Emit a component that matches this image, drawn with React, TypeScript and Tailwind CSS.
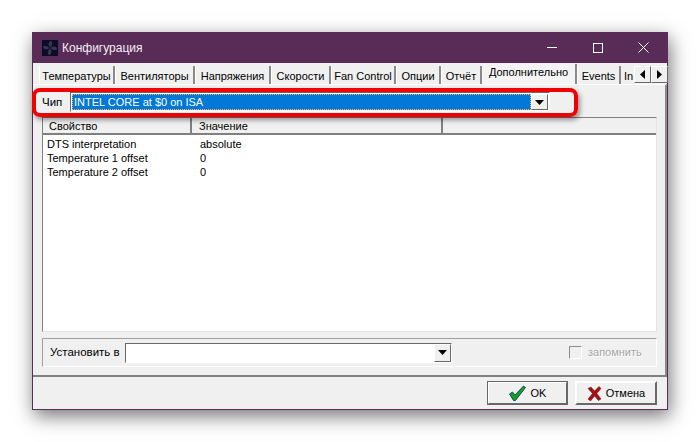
import React from "react";

const tabs = [
  { label: "Температуры", w: "w-[76px]" },
  { label: "Вентиляторы", w: "w-[80px]" },
  { label: "Напряжения", w: "w-[76px]" },
  { label: "Скорости", w: "w-[60px]" },
  { label: "Fan Control", w: "w-[65px]" },
  { label: "Опции", w: "w-[45px]" },
  { label: "Отчёт", w: "w-[41px]" },
];

function Arrow({ dir }: { dir: "left" | "right" | "down" }) {
  if (dir === "down") {
    return (
      <svg width="9" height="5" viewBox="0 0 9 5">
        <path d="M0 0h9L4.5 5z" fill="#000" />
      </svg>
    );
  }
  return (
    <svg width="5" height="9" viewBox="0 0 5 9">
      <path d={dir === "left" ? "M5 0v9L0 4.5z" : "M0 0v9l5-4.5z"} fill="#000" />
    </svg>
  );
}

function DropButton() {
  return (
    <div className="flex h-full w-[17px] shrink-0 items-center justify-center border border-t-white border-l-white border-r-[#696969] border-b-[#696969] bg-[#f0f0f0]">
      <Arrow dir="down" />
    </div>
  );
}

function Tab({ label, w }: { label: string; w: string }) {
  return (
    <div className={`${w} flex h-[18px] shrink-0 items-center justify-center border-r-2 border-r-[#8a8a8a] border-l border-l-white bg-[#f0f0f0] pt-[2px] text-[11px] leading-none`}>
      {label}
    </div>
  );
}

function FanIcon() {
  return (
    <svg width="16" height="16" viewBox="0 0 16 16">
      <rect width="16" height="16" fill="#0c0d22" />
      <g fill="#3a3558">
        <path d="M8 8C6 5 6 2 9 1c2 1 1 5-1 7z" />
        <path d="M8 8c3-2 6-2 7 1-1 2-5 1-7-1z" />
        <path d="M8 8c2 3 2 6-1 7-2-1-1-5 1-7z" />
        <path d="M8 8c-3 2-6 2-7-1 1-2 5-1 7 1z" />
      </g>
      <circle cx="8" cy="8" r="1.4" fill="#17182f" />
    </svg>
  );
}

export default function App() {
  return (
    <div className="relative h-[442px] w-[700px] overflow-hidden bg-white pl-[32px] pt-[32px] font-['Liberation_Sans',sans-serif] text-[11px] text-black">
      <div className="flex h-[378px] w-[636px] flex-col border border-[#5b2c57] border-t-0 bg-[#f0f0f0] shadow-[2px_6px_18px_rgba(0,0,0,0.55)]">
        {/* title bar */}
        <div className="flex h-[31px] shrink-0 items-center bg-[#582c57] pl-[9px] text-white">
          <FanIcon />
          <span className="ml-[4px] text-[12px] text-[#f4eef4]">Конфигурация</span>
          <div className="ml-auto flex items-center">
            <div className="flex w-[46px] justify-center">
              <div className="h-px w-[10px] bg-white" />
            </div>
            <div className="flex w-[46px] justify-center">
              <div className="h-[10px] w-[10px] border border-white" />
            </div>
            <div className="flex w-[46px] justify-center pr-[2px]">
              <svg width="11" height="11" viewBox="0 0 11 11">
                <path d="M0.5 0.5l10 10M10.5 0.5l-10 10" stroke="#fff" strokeWidth="1" fill="none" />
              </svg>
            </div>
          </div>
        </div>

        {/* tabs */}
        <div className="flex h-[21px] shrink-0 items-end pl-[6px]">
          {tabs.map((t) => (
            <Tab key={t.label} label={t.label} w={t.w} />
          ))}
          <div className="flex h-[20px] w-[95px] shrink-0 items-start justify-center border-r-2 border-r-[#8a8a8a] bg-[#f4f4f4] pt-[3px] text-[11px] leading-none">
            Дополнительно
          </div>
          <Tab label="Events" w="w-[44px]" />
          <div className="relative flex h-[18px] w-[47px] shrink-0 items-center overflow-hidden pl-[3px] pt-[2px] text-[11px] leading-none">
            In
            <div className="absolute right-0 top-0 flex h-[17px]">
              <div className="flex w-[17px] items-center justify-center border border-t-white border-l-white border-r-[#696969] border-b-[#696969] bg-[#f0f0f0]">
                <Arrow dir="left" />
              </div>
              <div className="flex w-[17px] items-center justify-center border border-t-white border-l-white border-r-[#696969] border-b-[#696969] bg-[#f0f0f0]">
                <Arrow dir="right" />
              </div>
            </div>
          </div>
        </div>

        {/* tab page */}
        <div className="flex h-[291px] shrink-0 flex-col border-t border-r-2 border-t-white border-r-[#8a8a8a] pl-[9px] pr-[8px]">
          <div className="flex h-[32px] shrink-0 items-center pt-[2px]">
            <span className="w-[28px] pt-[2px] text-[11.5px]">Чип</span>
            <div className="flex h-[20px] w-[480px] items-stretch border border-t-[#696969] border-l-[#696969] border-b-white border-r-white bg-white p-px">
              <div className="flex flex-1 items-center border border-dotted border-[#ffb45a] bg-[#0078d7] pl-px pt-px text-[11px] text-white">
                INTEL CORE at $0 on ISA
              </div>
              <DropButton />
            </div>
          </div>

          {/* property list */}
          <div className="flex h-[215px] shrink-0 flex-col border border-t-[#808080] border-l-[#808080] border-r-[#e4e4e4] border-b-[#e4e4e4] bg-white">
            <div className="flex h-[17px] shrink-0 border-b-2 border-b-[#808080] bg-[#f0f0f0] text-[11px] leading-none">
              <div className="flex w-[149px] items-center border-r-2 border-r-[#808080] pl-[6px] pt-[2px]">Свойство</div>
              <div className="flex w-[251px] items-center border-r-2 border-r-[#808080] pl-[7px] pt-[2px]">Значение</div>
              <div className="flex-1" />
            </div>
            <div className="flex flex-col pt-[2px]">
              {[
                ["DTS interpretation", "absolute"],
                ["Temperature 1 offset", "0"],
                ["Temperature 2 offset", "0"],
              ].map(([name, value]) => (
                <div key={name} className="flex h-[14px] items-center text-[11px] leading-none">
                  <span className="w-[157px] pl-[4px]">{name}</span>
                  <span>{value}</span>
                </div>
              ))}
            </div>
          </div>

          {/* set value group */}
          <div className="mt-[6px] flex h-[29px] shrink-0 items-center border border-t-[#a0a0a0] border-l-[#a0a0a0] border-r-white border-b-white">
            <span className="ml-[7px] w-[75px] text-[11.5px]">Установить в</span>
            <div className="flex h-[20px] w-[327px] items-stretch border border-t-[#696969] border-l-[#696969] border-b-white border-r-white bg-white">
              <div className="flex-1" />
              <DropButton />
            </div>
            <div className="ml-[117px] h-[13px] w-[13px] border border-t-[#8c8c8c] border-l-[#8c8c8c] border-r-white border-b-white bg-[#f0f0f0]" />
            <span className="ml-[6px] text-[11px] text-[#a6a6a6] [text-shadow:1px_1px_0_#fff]">запомнить</span>
          </div>
        </div>

        {/* buttons */}
        <div className="flex flex-1 items-center justify-end gap-[7px] border-t-2 border-t-[#808080] pr-[10px]">
          <div className="flex h-[24px] w-[81px] items-center justify-center gap-[5px] border-2 border-t-white border-l-white border-r-[#696969] border-b-[#696969] text-[11px] outline-1 -outline-offset-1 outline-[#666666]">
            <svg width="17" height="16" viewBox="0 0 17 16">
              <path d="M0.5 9l3-2 2.5 3L14.5 1l2 1.5L6.5 15.5h-2z" fill="#14a01e" stroke="#0a2a6a" strokeWidth="0.8" />
            </svg>
            OK
          </div>
          <div className="flex h-[24px] w-[82px] items-center justify-center gap-[4px] border-2 border-t-white border-l-white border-r-[#696969] border-b-[#696969] text-[11px]">
            <svg width="15" height="15" viewBox="0 0 15 15">
              <path d="M1 2.5L4 1l3.5 4L12 0.5l2 2L9.8 7.5 14 13l-2.5 1.5-4-4.5-4 5L1 13l4.5-5.5z" fill="#a80f12" stroke="#5e1012" strokeWidth="0.5" />
            </svg>
            Отмена
          </div>
        </div>
      </div>

      {/* red highlight over the chip row */}
      <div className="absolute left-[32px] top-[88px] h-[29px] w-[546px] rounded-[8px] border-[4px] border-[#f00000] shadow-[2px_3px_5px_rgba(0,0,0,0.4)]" />
    </div>
  );
}
